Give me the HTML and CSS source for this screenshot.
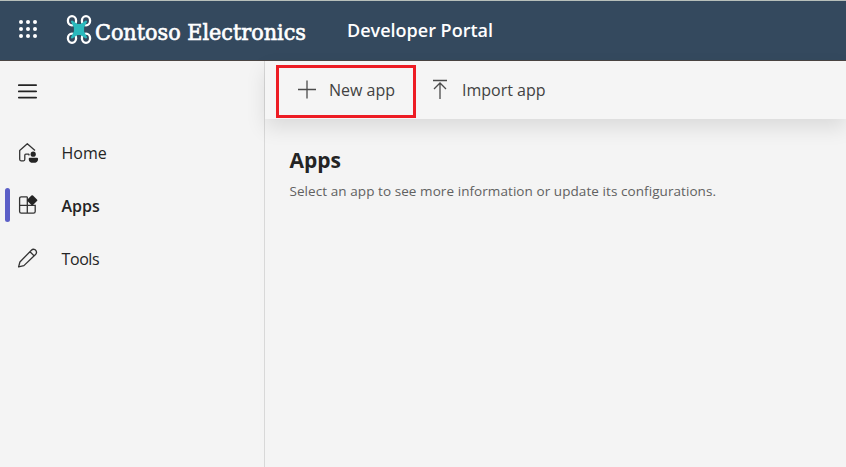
FILE: index.html
```html
<!DOCTYPE html>
<html lang="en">
<head>
<meta charset="utf-8">
<title>Developer Portal</title>
<link rel="stylesheet" href="styles.css">
</head>
<body>
<header class="header">
  <svg class="waffle" width="20" height="20" viewBox="0 0 20 20" fill="#fff">
    <circle cx="3" cy="3" r="2"/><circle cx="10" cy="3" r="2"/><circle cx="17" cy="3" r="2"/>
    <circle cx="3" cy="10" r="2"/><circle cx="10" cy="10" r="2"/><circle cx="17" cy="10" r="2"/>
    <circle cx="3" cy="17" r="2"/><circle cx="10" cy="17" r="2"/><circle cx="17" cy="17" r="2"/>
  </svg>
  <svg class="brand" width="252" height="46" viewBox="0 0 252 46" role="img">
    <g fill="none" stroke="#fff" stroke-width="2.3">
      <ellipse cx="6" cy="8.8" rx="4.1" ry="4.6"/><ellipse cx="20" cy="8.8" rx="4.1" ry="4.6"/>
      <ellipse cx="6" cy="26.2" rx="4.1" ry="4.6"/><ellipse cx="20" cy="26.2" rx="4.1" ry="4.6"/>
    </g>
    <path fill="#2bb9bd" stroke="#2bb9bd" stroke-width="2.2" stroke-linejoin="round" d="M6 9.6 11 13.2H15L20 9.6 17 15.2V19.8L20 25.4 15 21.8H11L6 25.4 9 19.8V15.2Z"/>
    <text class="brand-text" x="29" y="27.5" textLength="211" lengthAdjust="spacingAndGlyphs">Contoso Electronics</text>
  </svg>
  <span class="product">Developer Portal</span>
</header>
<div class="body">
  <nav class="sidebar">
    <svg class="menu" width="20" height="18" viewBox="0 0 20 18" stroke="#242424" stroke-width="1.7" stroke-linecap="round"><path d="M1.8 2.2h17.4M1.8 8.4h17.4M1.8 14.6h17.4"/></svg>
    <a class="item">
      <svg width="22" height="22" viewBox="0 0 22 22"><path d="M18 8.5 10.3 1.8 2.7 8.6V17.3Q2.7 18.8 4 18.8H6.6Q7.8 18.8 7.8 17.3V13.2Q7.8 12.2 8.8 12.2H11.6L12.3 13.4" fill="none" stroke="#333" stroke-width="1.3" stroke-linejoin="round"/><circle cx="16.2" cy="12.2" r="2.6" fill="#242424"/><path d="M12.8 15.8h7.2q1.1 0 1.1 1.1c0 2.5-1.8 3.9-4.7 3.9s-4.7-1.4-4.7-3.9q0-1.1 1.1-1.1Z" fill="#242424"/></svg>
      <span class="home">Home</span>
    </a>
    <a class="item active">
      <svg width="22" height="22" viewBox="0 0 22 22"><path d="M10.3 1.8H4.3Q2.6 1.8 2.6 3.5V16.5Q2.6 18.2 4.3 18.2H16.5Q18.2 18.2 18.2 16.5V10.3H2.6M10.3 1.8V18.2" fill="none" stroke="#333" stroke-width="1.3"/><path d="m15.2 1.3 4 4-4 4-4-4Z" fill="#242424" stroke="#242424" stroke-width="2.2" stroke-linejoin="round"/></svg>
      <span class="apps">Apps</span>
    </a>
    <a class="item">
      <svg width="22" height="22" viewBox="0 0 22 22"><path d="M1.6 18.9 2.9 14 14.4 2.2Q16 .6 18.2 1.8 20.5 4 18.8 6.2L6.9 17.6ZM13 3.8 17 7.7" fill="none" stroke="#333" stroke-width="1.3" stroke-linejoin="round"/></svg>
      <span class="tools">Tools</span>
    </a>
  </nav>
  <main class="main">
    <div class="toolbar">
      <button class="action highlighted">
        <svg width="20" height="20" viewBox="0 0 20 20" fill="none" stroke="#4b4b4b" stroke-width="1.3"><path d="M1 9.5h18M10 .5v18"/></svg>
        <span class="new">New app</span>
      </button>
      <button class="action">
        <svg width="16" height="22" viewBox="0 0 16 22" fill="none" stroke="#4b4b4b" stroke-width="1.3"><path d="M1 1.5h14M8 20V4M2 10l6-6 6 6"/></svg>
        <span class="import">Import app</span>
      </button>
    </div>
    <section class="content">
      <h1>Apps</h1>
      <p>Select an app to see more information or update its configurations.</p>
    </section>
  </main>
</div>
</body>
</html>
```
FILE: styles.css
```css
* { box-sizing: border-box; }
body {
  margin: 0;
  height: 467px;
  overflow: hidden;
  background: #f4f4f4;
  color: #242424;
  font-family: "Open Sans", "Noto Sans", sans-serif;
  font-size: 16px;
}
svg { display: block; flex: none; }
.header {
  height: 61px;
  display: flex;
  align-items: flex-start;
  background: #34495e;
  border-top: 1px solid #b7bfba;
  border-bottom: 1px solid #4a4543;
}
.waffle { margin: 18px 0 0 18px; }
.brand { margin: 11px 0 0 28px; overflow: visible; }
.brand-text { font: 23px "DejaVu Serif", serif; fill: #fff; stroke: #fff; stroke-width: .7px; }
.product { margin: 17px 0 0 29px; color: #fff; font-size: 18px; font-weight: 600; line-height: 25px; white-space: nowrap; }
.body { display: flex; height: 406px; }
.sidebar { width: 265px; padding-top: 22px; border-right: 1px solid #d8d8d8; flex: none; }
.menu { margin: 0 0 25px 17px; }
.item { height: 53px; padding-left: 17px; display: flex; align-items: center; position: relative; }
.item span { margin-left: 22.5px; line-height: 24px; }
.item .tools { letter-spacing: -.4px; }
.active { font-weight: 600; }
.active::before { content: ""; position: absolute; left: 5px; top: 9px; width: 5px; height: 34px; border-radius: 3px; background: #5b5fc7; }
.main { flex: 1; min-width: 0; }
.toolbar {
  height: 58px;
  padding: 4px 0 0 11px;
  display: flex;
  background: #f5f5f5;
  box-shadow: 0 9px 20px rgba(0, 0, 0, .1);
}
.action { height: 53px; margin: 0; padding: 0 0 4px 16px; display: flex; align-items: center; border: 0; background: none; color: #424242; font: inherit; white-space: nowrap; }
.highlighted { width: 140px; padding: 0 0 4px 18px; border: 3px solid #ed1c24; }
.highlighted span { margin-left: 12px; }
.import { margin-left: 14px; }
.content { padding: 27px 0 0 24.5px; }
h1 { margin: 0; font-size: 21px; font-weight: 700; line-height: 28px; }
p { margin: 8px 0 0; font-size: 13.5px; line-height: 18px; letter-spacing: .07px; color: #616161; white-space: nowrap; }
```
